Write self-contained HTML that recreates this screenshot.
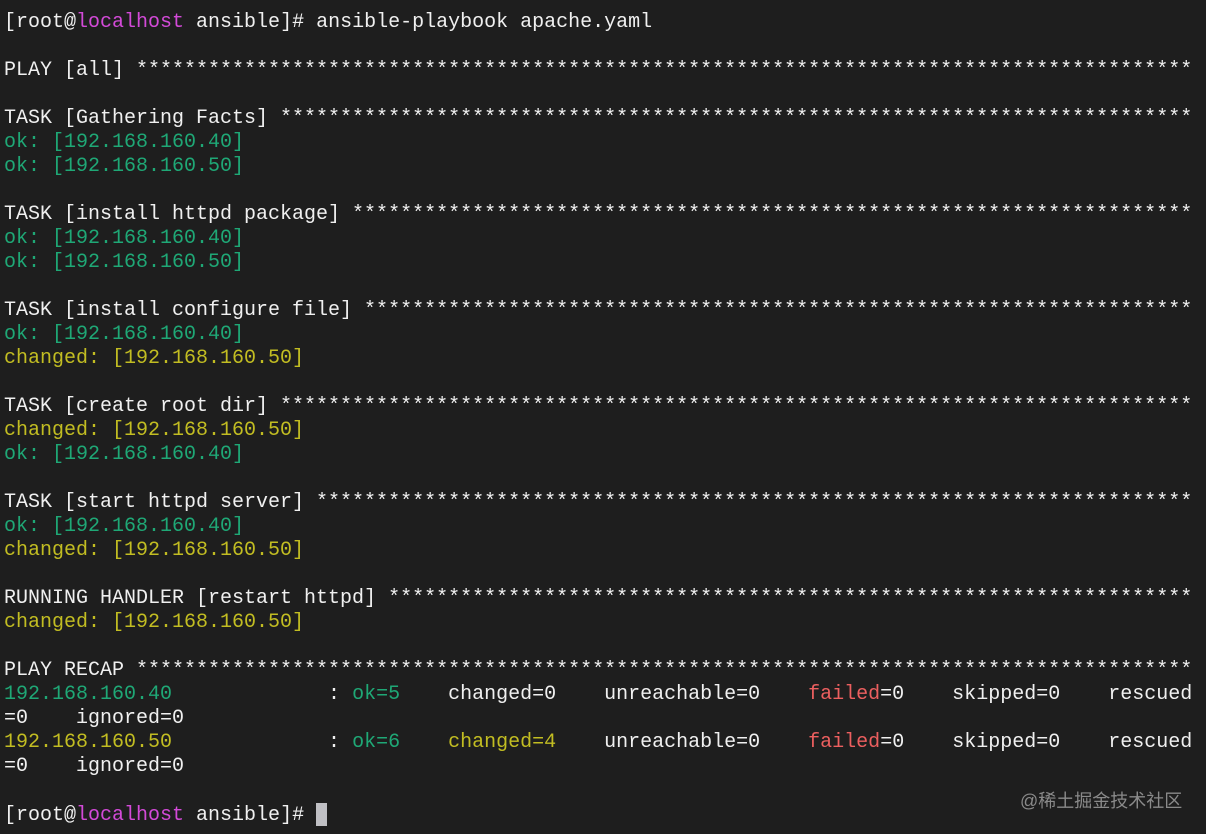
<!DOCTYPE html>
<html><head><meta charset="utf-8"><style>
html,body{margin:0;padding:0;background:#1e1e1e;}
body{width:1206px;height:834px;overflow:hidden;position:relative;}
.t{position:absolute;left:4px;top:11px;font-family:"Liberation Mono","DejaVu Sans Mono",monospace;font-size:20px;line-height:24px;color:#f0f0f0;}
.l{white-space:pre;height:24px;width:1188px;overflow:hidden;}
.g{color:#1fa876}.y{color:#c2bd22}.r{color:#ec5f5f}.m{color:#d34ad8}
.cur{display:inline-block;width:11px;height:23px;background:#c0c0c4;vertical-align:-6px}
.wm{position:absolute;left:1020px;top:787px;font-family:"Liberation Sans","Noto Sans CJK SC",sans-serif;font-size:18px;color:#8a8a8a;}
</style></head><body>
<div class="t">
<div class="l">[root@<span class="m">localhost</span> ansible]# ansible-playbook apache.yaml</div>
<div class="l"> </div>
<div class="l">PLAY [all] ****************************************************************************************************</div>
<div class="l"> </div>
<div class="l">TASK [Gathering Facts] ****************************************************************************************************</div>
<div class="l g">ok: [192.168.160.40]</div>
<div class="l g">ok: [192.168.160.50]</div>
<div class="l"> </div>
<div class="l">TASK [install httpd package] ****************************************************************************************************</div>
<div class="l g">ok: [192.168.160.40]</div>
<div class="l g">ok: [192.168.160.50]</div>
<div class="l"> </div>
<div class="l">TASK [install configure file] ****************************************************************************************************</div>
<div class="l g">ok: [192.168.160.40]</div>
<div class="l y">changed: [192.168.160.50]</div>
<div class="l"> </div>
<div class="l">TASK [create root dir] ****************************************************************************************************</div>
<div class="l y">changed: [192.168.160.50]</div>
<div class="l g">ok: [192.168.160.40]</div>
<div class="l"> </div>
<div class="l">TASK [start httpd server] ****************************************************************************************************</div>
<div class="l g">ok: [192.168.160.40]</div>
<div class="l y">changed: [192.168.160.50]</div>
<div class="l"> </div>
<div class="l">RUNNING HANDLER [restart httpd] ****************************************************************************************************</div>
<div class="l y">changed: [192.168.160.50]</div>
<div class="l"> </div>
<div class="l">PLAY RECAP ****************************************************************************************************</div>
<div class="l"><span class="g">192.168.160.40</span>             : <span class="g">ok=5</span>    changed=0    unreachable=0    <span class="r">failed</span>=0    skipped=0    rescued</div>
<div class="l">=0    ignored=0</div>
<div class="l"><span class="y">192.168.160.50</span>             : <span class="g">ok=6</span>    <span class="y">changed=4</span>    unreachable=0    <span class="r">failed</span>=0    skipped=0    rescued</div>
<div class="l">=0    ignored=0</div>
<div class="l"> </div>
<div class="l">[root@<span class="m">localhost</span> ansible]# <span class="cur"></span></div>
</div>
<div class="wm">@稀土掘金技术社区</div>
</body></html>
